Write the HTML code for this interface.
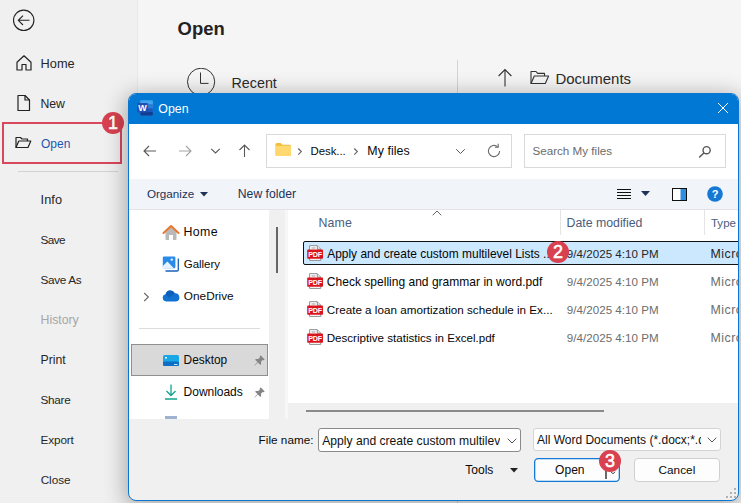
<!DOCTYPE html>
<html><head><meta charset="utf-8">
<style>
*{box-sizing:border-box;margin:0;padding:0}
html,body{width:741px;height:503px;overflow:hidden}
body{position:relative;background:#f5f5f5;font-family:"Liberation Sans",sans-serif;color:#1b1b1b}
.abs{position:absolute}
.t{position:absolute;white-space:nowrap;line-height:1}
#side{position:absolute;left:0;top:0;width:137px;height:503px;background:#f0f0f0}
#dlg{position:absolute;left:128px;top:93px;width:611px;height:408px;border:1px solid #0a76d2;border-radius:8px;background:#f0f0f0;overflow:hidden;box-shadow:0 4px 22px 2px rgba(0,0,0,.32)}
#dlg .in{position:absolute;left:-129px;top:-94px;width:741px;height:503px}
.badge{position:absolute;width:22px;height:22px;border-radius:50%;background:#d8414f;color:#fff;font-weight:normal;-webkit-text-stroke:0.550px #fff;font-size:18px;text-align:center;line-height:22px}
</style></head><body>
<div id="side"></div><div class="abs" style="left:137px;top:0;width:1px;height:503px;background:#e8e8e8"></div>
<svg class="abs" style="left:12px;top:8.500px" width="24" height="24" viewBox="0 0 24 24" fill="none" stroke="#222" stroke-width="1.100"><circle cx="11.700" cy="11.300" r="10.200"/><path d="M17.500 11.300H6.500M11 6.600L6.300 11.300L11 16"/></svg>
<svg class="abs" style="left:15px;top:54px" width="18" height="18" viewBox="0 0 18 18" fill="none" stroke="#222" stroke-width="1.200" stroke-linejoin="round"><path d="M2 8.200L9 1.800L16 8.200V16H11V10.500H7V16H2Z"/></svg>
<div class="t" style="left:40.59px;top:58.00px;font-size:12.77px;color:#262626;letter-spacing:0.026px">Home</div>
<svg class="abs" style="left:16px;top:94px" width="16" height="18" viewBox="0 0 16 18" fill="none" stroke="#222" stroke-width="1.200" stroke-linejoin="round"><path d="M2 1.500H9L13.500 6V16.500H2Z"/><path d="M9 1.500V6H13.500"/></svg>
<div class="t" style="left:40.59px;top:98.00px;font-size:12.28px;color:#262626;letter-spacing:-0.083px">New</div>
<div class="abs" style="left:2px;top:122px;width:120px;height:42px;border:2px solid #d8475c"></div>
<svg class="abs" style="left:15px;top:136px" width="17" height="13" viewBox="0 0 17 13" fill="none" stroke="#222" stroke-width="1.200" stroke-linejoin="round"><path d="M1 11.500V1.500H5.500L7 3H12.500V5"/><path d="M1 11.500L3.800 5H15.800L13 11.500Z"/></svg>
<div class="t" style="left:40.89px;top:139.00px;font-size:11.97px;color:#1e56b0;letter-spacing:0.055px">Open</div>
<div class="abs" style="left:18px;top:171px;width:100px;height:1px;background:#d2d2d2"></div>
<div class="t" style="left:40.56px;top:194.00px;font-size:12.77px;color:#262626;letter-spacing:0.054px">Info</div>
<div class="t" style="left:40.53px;top:234.00px;font-size:11.78px;color:#262626;letter-spacing:-0.622px">Save</div>
<div class="t" style="left:40.53px;top:274.00px;font-size:11.78px;color:#262626;letter-spacing:-0.362px">Save As</div>
<div class="t" style="left:40.59px;top:314.00px;font-size:12.32px;color:#a6a6a6;letter-spacing:-0.036px">History</div>
<div class="t" style="left:40.59px;top:354.00px;font-size:12.26px;color:#262626;letter-spacing:-0.018px">Print</div>
<div class="t" style="left:40.53px;top:394.00px;font-size:11.78px;color:#262626;letter-spacing:-0.296px">Share</div>
<div class="t" style="left:40.62px;top:434.00px;font-size:11.78px;color:#262626;letter-spacing:-0.144px">Export</div>
<div class="t" style="left:40.64px;top:474.00px;font-size:11.78px;color:#262626;letter-spacing:-0.019px">Close</div>
<div class="badge" style="left:102px;top:112px">1</div>

<div class="t" style="left:177.49px;top:20.00px;font-size:18.46px;color:#222;letter-spacing:0.050px;font-weight:bold">Open</div>
<svg class="abs" style="left:186px;top:68px" width="30" height="30" viewBox="0 0 30 30" fill="none" stroke="#333" stroke-width="1"><circle cx="15.100" cy="13.800" r="13.600"/><path d="M14.500 4.500V15.400H22.500"/></svg>
<div class="t" style="left:231.56px;top:76.00px;font-size:14.31px;color:#2b2b2b;letter-spacing:-0.006px">Recent</div>
<div class="abs" style="left:457px;top:60px;width:1px;height:443px;background:#d4d4d4"></div>
<svg class="abs" style="left:497px;top:68px" width="16" height="20" viewBox="0 0 16 20" fill="none" stroke="#333" stroke-width="1.100"><path d="M8 18.600V1.600M1.600 8L8 1.600L14.400 8"/></svg>
<svg class="abs" style="left:530px;top:70px" width="20" height="15" viewBox="0 0 20 15" fill="none" stroke="#333" stroke-width="1.100" stroke-linejoin="round"><path d="M1 13.500V1.500H6L7.600 3.400H14.500V6"/><path d="M1 13.500L4.300 6H18.600L15.300 13.500Z"/></svg>
<div class="t" style="left:555.44px;top:72.00px;font-size:14.97px;color:#2b2b2b;letter-spacing:-0.014px">Documents</div>

<div id="dlg"><div class="in">
 <div class="abs" style="left:129px;top:94px;width:610px;height:30px;background:#0078d4"></div>
 <div class="abs" style="left:129px;top:124px;width:610px;height:55px;background:#fff"></div>
 <div class="abs" style="left:129px;top:179px;width:610px;height:30px;background:#f1f4f9"></div>
 <div class="abs" style="left:129px;top:209px;width:610px;height:1px;background:#e3e3e3"></div>
 <div class="abs" style="left:129px;top:210px;width:610px;height:209px;background:#fff"></div>
 <svg class="abs" style="left:137px;top:100px" width="16" height="16" viewBox="0 0 16 16"><rect x="3.200" y="0.200" width="12.700" height="15.600" rx="0.800" fill="#41a5ee"/><rect x="3.200" y="4.200" width="12.700" height="4" fill="#2b7cd3"/><rect x="3.200" y="8.200" width="12.700" height="3.800" fill="#185abd"/><path d="M3.200 12H15.900V15a0.800 0.800 0 0 1-0.800 0.800H4a0.800 0.800 0 0 1-0.800-0.800Z" fill="#103f91"/><rect x="0.100" y="3" width="10.800" height="9.600" rx="0.800" fill="#1f50b5"/><text x="5.500" y="11.100" font-size="9" font-weight="bold" fill="#fff" text-anchor="middle" font-family="Liberation Sans, sans-serif">W</text></svg>
 <div class="t" style="left:158.37px;top:103.00px;font-size:12.39px;color:#fff">Open</div>
 <svg class="abs" style="left:717px;top:102px" width="12" height="12" viewBox="0 0 12 12" stroke="#fff" stroke-width="1" fill="none"><path d="M1 1L11 11M11 1L1 11"/></svg>
 <svg class="abs" style="left:143px;top:144px" width="14" height="14" viewBox="0 0 14 14" fill="none" stroke="#5a5a5a" stroke-width="1.100"><path d="M13 7H1.200M6 2L1 7L6 12"/></svg>
 <svg class="abs" style="left:178px;top:144px" width="14" height="14" viewBox="0 0 14 14" fill="none" stroke="#a3a3a3" stroke-width="1.100"><path d="M1 7H12.800M8 2L13 7L8 12"/></svg>
 <svg class="abs" style="left:210px;top:147px" width="11" height="8" viewBox="0 0 11 8" fill="none" stroke="#5a5a5a" stroke-width="1.100"><path d="M1.200 1.800L5.500 6L9.800 1.800"/></svg>
 <svg class="abs" style="left:238px;top:144px" width="13" height="14" viewBox="0 0 13 14" fill="none" stroke="#5a5a5a" stroke-width="1.100"><path d="M6.500 13V1.200M1.500 6L6.500 1L11.500 6"/></svg>
 <div class="abs" style="left:266px;top:134px;width:246px;height:34px;border:1px solid #d9d9d9;background:#fff"></div>
 <svg class="abs" style="left:275px;top:142px" width="17" height="15" viewBox="0 0 17 15"><path d="M0.500 2.500a1.500 1.500 0 0 1 1.500-1.500h3.600l1.800 1.800h7.100a1.500 1.500 0 0 1 1.500 1.500v8.200a1.500 1.500 0 0 1-1.500 1.500h-12.500a1.500 1.500 0 0 1-1.500-1.500z" fill="#f2bb3a"/><path d="M0.500 5.200a1.500 1.500 0 0 1 1.500-1.500h12.500a1.500 1.500 0 0 1 1.500 1.500v7.300a1.500 1.500 0 0 1-1.500 1.500h-12.500a1.500 1.500 0 0 1-1.500-1.500z" fill="#ffd970"/></svg>
 <svg class="abs" style="left:297px;top:147px" width="6" height="9" viewBox="0 0 6 9" fill="none" stroke="#666" stroke-width="1.200"><path d="M1.300 1.500L4.300 4.600L1.300 7.700"/></svg>
 <div class="t" style="left:310.55px;top:146.00px;font-size:11.4px;color:#0a0a0a;letter-spacing:-0.049px">Desk...</div>
 <svg class="abs" style="left:353px;top:147px" width="6" height="9" viewBox="0 0 6 9" fill="none" stroke="#666" stroke-width="1.200"><path d="M1.300 1.500L4.300 4.600L1.300 7.700"/></svg>
 <div class="t" style="left:367.34px;top:145.00px;font-size:12.36px;color:#0a0a0a;letter-spacing:0.062px">My files</div>
 <svg class="abs" style="left:455px;top:148px" width="11" height="7" viewBox="0 0 11 7" fill="none" stroke="#5a5a5a" stroke-width="1"><path d="M1.200 1.200L5.500 5.500L9.800 1.200"/></svg>
 <svg class="abs" style="left:486px;top:143px" width="16" height="16" viewBox="0 0 16 16" fill="none" stroke="#6a6a6a" stroke-width="1.100"><path d="M13.600 8a5.600 5.600 0 1 1-1.900-4.200"/><path d="M12.200 0.800V4.200H8.800"/></svg>
 <div class="abs" style="left:524px;top:134px;width:202px;height:34px;border:1px solid #d9d9d9;background:#fff"></div>
 <div class="t" style="left:532.43px;top:145.00px;font-size:11.66px;color:#6b6b6b">Search My files</div>
 <svg class="abs" style="left:698px;top:145px" width="14" height="14" viewBox="0 0 14 14" fill="none" stroke="#555" stroke-width="1.400"><circle cx="8.600" cy="5.200" r="3.600"/><path d="M6 7.800L1.200 12.600"/></svg>
 <div class="t" style="left:146.89px;top:188.00px;font-size:11.65px;color:#1c3258;letter-spacing:0.022px">Organize</div>
 <svg class="abs" style="left:200px;top:192px" width="8" height="5" viewBox="0 0 8 5"><path d="M0 0H8L4 4.500Z" fill="#1c3258"/></svg>
 <div class="t" style="left:237.84px;top:188.00px;font-size:12.2px;color:#1c3258;letter-spacing:-0.010px">New folder</div>
 <svg class="abs" style="left:617px;top:188px" width="14" height="12" viewBox="0 0 14 12" stroke="#111" stroke-width="1" fill="none"><path d="M0 1.500H14M0 4.500H14M0 7.500H14M0 10.500H14"/></svg>
 <svg class="abs" style="left:641px;top:191px" width="9" height="5" viewBox="0 0 9 5"><path d="M0 0H9L4.500 5Z" fill="#1c3258"/></svg>
 <svg class="abs" style="left:672px;top:188px" width="15" height="13" viewBox="0 0 15 13"><rect x="0.500" y="0.500" width="14" height="12" fill="#fff" stroke="#111" stroke-width="1"/><rect x="8.500" y="1" width="5.500" height="11" fill="#2f8ee0"/></svg>
 <svg class="abs" style="left:707px;top:186px" width="16" height="16" viewBox="0 0 16 16"><circle cx="8" cy="8" r="7.800" fill="#1578d4"/><text x="8" y="12" font-size="11" font-weight="bold" fill="#fff" text-anchor="middle" font-family="Liberation Sans, sans-serif">?</text></svg>

 <div class="abs" style="left:269px;top:210px;width:16px;height:209px;background:#f0f0f0"></div>
 <div class="abs" style="left:285px;top:210px;width:3px;height:209px;background:#f7f7f7"></div>
 <div class="abs" style="left:276px;top:227px;width:2px;height:46px;background:#666"></div>
 <svg class="abs" style="left:162px;top:224px" width="18" height="17" viewBox="0 0 18 17"><path d="M3.500 8V15.200a0.800 0.800 0 0 0 0.800 0.800H7V11H11V16h2.700a0.800 0.800 0 0 0 0.800-0.800V8L9 3Z" fill="#b9b9b9"/><path d="M1.500 9L9 2L16.500 9" fill="none" stroke="#e8762c" stroke-width="2" stroke-linecap="round" stroke-linejoin="round"/></svg>
 <div class="t" style="left:183.59px;top:226.00px;font-size:12.36px;color:#0a0a0a;letter-spacing:0.338px">Home</div>
 <svg class="abs" style="left:162px;top:255px" width="18" height="18" viewBox="0 0 18 18"><path d="M16.300 3.500V14.800a1.200 1.200 0 0 1-1.200 1.200H3.500" fill="none" stroke="#1761b8" stroke-width="1.300"/><rect x="0.800" y="1.500" width="12.600" height="11.800" rx="1.300" fill="#2a8ae8"/><path d="M0.800 11L5.400 6.600L11.800 13.300H2.100A1.300 1.300 0 0 1 0.800 12Z" fill="#e4f3ff"/><circle cx="9.800" cy="4.600" r="1.200" fill="#e4f3ff"/></svg>
 <div class="t" style="left:183.87px;top:259.00px;font-size:11.49px;color:#0a0a0a;letter-spacing:-0.040px">Gallery</div>
 <svg class="abs" style="left:143px;top:292px" width="7" height="10" viewBox="0 0 7 10" fill="none" stroke="#6a6a6a" stroke-width="1.100"><path d="M1.200 1L5.400 5L1.200 9"/></svg>
 <svg class="abs" style="left:162px;top:290px" width="18" height="12" viewBox="0 0 18 12"><path d="M4.200 11.500a3.700 3.700 0 0 1-0.600-7.300A5 5 0 0 1 12.800 3.200a4.200 4.200 0 0 1 1.200 8.300Z" fill="#1272d2"/><path d="M3.600 4.200A5 5 0 0 1 12.800 3.200L7 8Z" fill="#0d5fbb"/></svg>
 <div class="t" style="left:183.87px;top:290.00px;font-size:11.79px;color:#0a0a0a">OneDrive</div>
 <div class="abs" style="left:139px;top:328px;width:121px;height:1px;background:#dcdcdc"></div>
 <div class="abs" style="left:131px;top:344px;width:137px;height:32px;background:#d9d9d9;border:1px solid #8f8f8f"></div>
 <svg class="abs" style="left:163px;top:354px" width="16" height="13" viewBox="0 0 16 13"><rect x="0" y="1" width="16" height="11" rx="1.500" fill="#1aa7e8"/><rect x="0" y="7.500" width="16" height="4.500" rx="1.500" fill="#0c6fc4"/><rect x="2" y="3" width="2" height="1.500" fill="#fff"/><rect x="11" y="10" width="3.500" height="1" fill="#bfe6ff"/></svg>
 <div class="t" style="left:183.62px;top:355.00px;font-size:11.9px;color:#0a0a0a;letter-spacing:-0.016px">Desktop</div>
 <svg class="abs" style="left:254px;top:355px" width="11" height="11" viewBox="0 0 11 11"><path d="M6.600 0.300L10.700 4.400L9.600 5.200L8.600 5.100L7 6.700L7.100 9L6.300 9.900L3.900 7.500L0.800 10.600L0.400 10.200L3.500 7.100L1.100 4.700L2 3.900L4.300 4L5.900 2.400L5.800 1.400Z" fill="#858585"/></svg>
 <svg class="abs" style="left:165px;top:384px" width="12" height="16" viewBox="0 0 12 16" fill="none" stroke="#13a38b" stroke-width="1.300"><path d="M6 0.500V11.500M1.500 7L6 11.500L10.500 7M0 15H12"/></svg>
 <div class="t" style="left:183.61px;top:386.00px;font-size:12.03px;color:#0a0a0a;letter-spacing:-0.036px">Downloads</div>
 <svg class="abs" style="left:254px;top:387px" width="11" height="11" viewBox="0 0 11 11"><path d="M6.600 0.300L10.700 4.400L9.600 5.200L8.600 5.100L7 6.700L7.100 9L6.300 9.900L3.900 7.500L0.800 10.600L0.400 10.200L3.500 7.100L1.100 4.700L2 3.900L4.300 4L5.900 2.400L5.800 1.400Z" fill="#858585"/></svg>
 <div class="abs" style="left:165px;top:416px;width:12px;height:3px;background:#9fb3d1"></div>

 <div class="t" style="left:318.59px;top:217.00px;font-size:12.36px;color:#4a5d7c;letter-spacing:0.088px">Name</div>
 <svg class="abs" style="left:432px;top:210px" width="10" height="6" viewBox="0 0 10 6" fill="none" stroke="#666" stroke-width="1"><path d="M0.700 5.300L5 1L9.300 5.300"/></svg>
 <div class="abs" style="left:560px;top:210px;width:1px;height:25px;background:#e4e4e4"></div>
 <div class="abs" style="left:704px;top:210px;width:1px;height:25px;background:#e4e4e4"></div>
 <div class="t" style="left:566.59px;top:217.00px;font-size:12.31px;color:#4a5d7c">Date modified</div>
 <div class="t" style="left:710.91px;top:218.00px;font-size:11.51px;color:#4a5d7c;letter-spacing:0.050px">Type</div>
 <div class="abs" style="left:303px;top:241px;width:440px;height:24px;background:#cce8ff;border:1px solid #111;border-radius:2px"></div>
 <svg class="abs" style="left:307px;top:245px" width="16" height="16" viewBox="0 0 16 16"><path d="M2.600 0.700H10.300L13.800 4.200V15.400H2.600Z" fill="#fff" stroke="#8f8f8f" stroke-width="1"/><path d="M10.300 0.700V4.200H13.800" fill="#e9e9e9" stroke="#8f8f8f"/><path d="M4.500 3H8.500" stroke="#9a9a9a" stroke-width="1"/><rect x="0.200" y="4.600" width="15.800" height="9.200" rx="0.800" fill="#d9141c"/><text x="8.100" y="12" font-size="7.200" font-weight="bold" fill="#fff" text-anchor="middle" font-family="Liberation Sans, sans-serif" letter-spacing="-0.200">PDF</text></svg><div class="t" style="left:327.18px;top:249.00px;font-size:11.95px;color:#050505;letter-spacing:0.007px">Apply and create custom multilevel Lists ...</div><div class="t" style="left:566.87px;top:249.00px;font-size:11.59px;color:#262626;letter-spacing:0.021px">9/4/2025 4:10 PM</div><div class="t" style="left:710.49px;top:248.00px;font-size:12.36px;color:#262626;letter-spacing:0.488px">Microsoft Edge PDF</div>
<svg class="abs" style="left:307px;top:273px" width="16" height="16" viewBox="0 0 16 16"><path d="M2.600 0.700H10.300L13.800 4.200V15.400H2.600Z" fill="#fff" stroke="#8f8f8f" stroke-width="1"/><path d="M10.300 0.700V4.200H13.800" fill="#e9e9e9" stroke="#8f8f8f"/><path d="M4.500 3H8.500" stroke="#9a9a9a" stroke-width="1"/><rect x="0.200" y="4.600" width="15.800" height="9.200" rx="0.800" fill="#d9141c"/><text x="8.100" y="12" font-size="7.200" font-weight="bold" fill="#fff" text-anchor="middle" font-family="Liberation Sans, sans-serif" letter-spacing="-0.200">PDF</text></svg><div class="t" style="left:326.84px;top:276.00px;font-size:12.03px;color:#050505;letter-spacing:0.011px">Check spelling and grammar in word.pdf</div><div class="t" style="left:566.87px;top:277.00px;font-size:11.59px;color:#6d6d6d;letter-spacing:0.021px">9/4/2025 4:10 PM</div><div class="t" style="left:710.49px;top:276.00px;font-size:12.36px;color:#6d6d6d;letter-spacing:0.488px">Microsoft Edge PDF</div>
<svg class="abs" style="left:307px;top:301px" width="16" height="16" viewBox="0 0 16 16"><path d="M2.600 0.700H10.300L13.800 4.200V15.400H2.600Z" fill="#fff" stroke="#8f8f8f" stroke-width="1"/><path d="M10.300 0.700V4.200H13.800" fill="#e9e9e9" stroke="#8f8f8f"/><path d="M4.500 3H8.500" stroke="#9a9a9a" stroke-width="1"/><rect x="0.200" y="4.600" width="15.800" height="9.200" rx="0.800" fill="#d9141c"/><text x="8.100" y="12" font-size="7.200" font-weight="bold" fill="#fff" text-anchor="middle" font-family="Liberation Sans, sans-serif" letter-spacing="-0.200">PDF</text></svg><div class="t" style="left:326.84px;top:304.00px;font-size:11.67px;color:#050505;letter-spacing:0.009px">Create a loan amortization schedule in Ex...</div><div class="t" style="left:566.87px;top:305.00px;font-size:11.59px;color:#6d6d6d;letter-spacing:0.021px">9/4/2025 4:10 PM</div><div class="t" style="left:710.49px;top:304.00px;font-size:12.36px;color:#6d6d6d;letter-spacing:0.488px">Microsoft Edge PDF</div>
<svg class="abs" style="left:307px;top:329px" width="16" height="16" viewBox="0 0 16 16"><path d="M2.600 0.700H10.300L13.800 4.200V15.400H2.600Z" fill="#fff" stroke="#8f8f8f" stroke-width="1"/><path d="M10.300 0.700V4.200H13.800" fill="#e9e9e9" stroke="#8f8f8f"/><path d="M4.500 3H8.500" stroke="#9a9a9a" stroke-width="1"/><rect x="0.200" y="4.600" width="15.800" height="9.200" rx="0.800" fill="#d9141c"/><text x="8.100" y="12" font-size="7.200" font-weight="bold" fill="#fff" text-anchor="middle" font-family="Liberation Sans, sans-serif" letter-spacing="-0.200">PDF</text></svg><div class="t" style="left:326.63px;top:333.00px;font-size:11.59px;color:#050505;letter-spacing:0.008px">Descriptive statistics in Excel.pdf</div><div class="t" style="left:566.87px;top:333.00px;font-size:11.59px;color:#6d6d6d;letter-spacing:0.021px">9/4/2025 4:10 PM</div><div class="t" style="left:710.49px;top:332.00px;font-size:12.36px;color:#6d6d6d;letter-spacing:0.488px">Microsoft Edge PDF</div>

 <div class="badge" style="left:547px;top:241px">2</div>
 <div class="abs" style="left:288px;top:403px;width:451px;height:16px;background:#f0f0f0"></div>
 <div class="abs" style="left:306px;top:410px;width:298px;height:2px;background:#8a8a8a"></div>

 <div class="t" style="left:258.62px;top:434.00px;font-size:11.72px;color:#0a0a0a;letter-spacing:0.020px">File name:</div>
 <div class="abs" style="left:318px;top:428px;width:203px;height:24px;background:#fff;border:1px solid #8a8a8a;border-radius:3px"></div>
 <div class="abs" style="left:319px;top:429px;width:181px;height:22px;overflow:hidden"><div class="abs" style="left:-319px;top:-429px;width:741px;height:503px"><div class="t" style="left:322.17px;top:435.00px;font-size:12.13px;color:#111;letter-spacing:0.005px">Apply and create custom multilevel Lists</div></div></div>
 <svg class="abs" style="left:507px;top:438px" width="10" height="6" viewBox="0 0 10 6" fill="none" stroke="#555" stroke-width="1"><path d="M0.700 0.700L5 5L9.300 0.700"/></svg>
 <div class="abs" style="left:533px;top:428px;width:188px;height:23px;background:#fdfdfd;border:1px solid #d4d4d4;border-radius:3px"></div>
 <div class="abs" style="left:534px;top:429px;width:167px;height:21px;overflow:hidden"><div class="abs" style="left:-534px;top:-429px;width:741px;height:503px"><div class="t" style="left:536.98px;top:434.00px;font-size:12px;color:#111">All Word Documents (*.docx;*.docm;*.dotx)</div></div></div>
 <svg class="abs" style="left:707px;top:437px" width="10" height="6" viewBox="0 0 10 6" fill="none" stroke="#555" stroke-width="1"><path d="M0.700 0.700L5 5L9.300 0.700"/></svg>
 <div class="t" style="left:465.27px;top:464.00px;font-size:12.07px;color:#0a0a0a;letter-spacing:-0.007px">Tools</div>
 <svg class="abs" style="left:510px;top:468px" width="8" height="5" viewBox="0 0 8 5"><path d="M0 0H8L4 4.500Z" fill="#222"/></svg>
 <svg class="abs" style="left:533px;top:457px" width="88" height="26" viewBox="0 0 88 26"><rect x="1.650" y="1.650" width="84.700" height="22.700" rx="3.500" fill="#fdfdfd" stroke="#1279d6" stroke-width="1.300"/></svg>
 <div class="t" style="left:555.09px;top:464.00px;font-size:12.02px;color:#0a0a0a;letter-spacing:0.012px">Open</div>
 <div class="abs" style="left:605px;top:470px;width:2px;height:9px;background:#6a6a6a"></div>
 <svg class="abs" style="left:610px;top:471px" width="6" height="4" viewBox="0 0 6 4" fill="none" stroke="#333" stroke-width="1"><path d="M1 0.800L3 2.800L5 0.800"/></svg>
 <div class="abs" style="left:634px;top:458px;width:86px;height:24px;background:#fdfdfd;border:1px solid #d0d0d0;border-radius:4px"></div>
 <div class="t" style="left:658.54px;top:464.00px;font-size:11.75px;color:#0a0a0a;letter-spacing:0.031px">Cancel</div>
 <div class="badge" style="left:599px;top:450px">3</div>
 <svg class="abs" style="left:726px;top:488px" width="11" height="11" viewBox="0 0 11 11" fill="#b0b0b0"><rect x="8" y="0" width="2" height="2"/><rect x="4" y="4" width="2" height="2"/><rect x="8" y="4" width="2" height="2"/><rect x="0" y="8" width="2" height="2"/><rect x="4" y="8" width="2" height="2"/><rect x="8" y="8" width="2" height="2"/></svg>
</div></div>
</body></html>
